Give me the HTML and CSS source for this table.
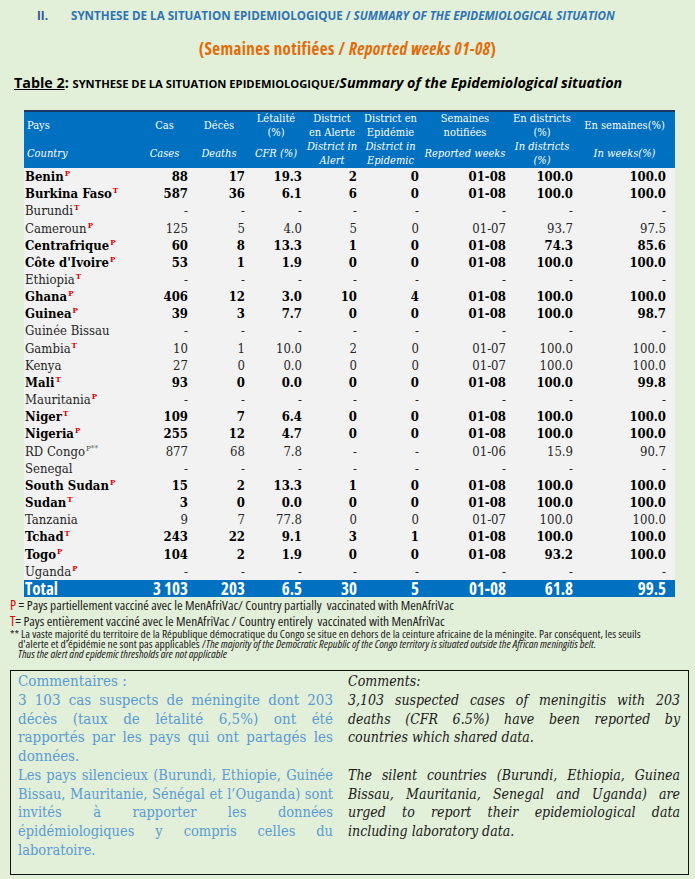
FILE: index.html
```html
<!DOCTYPE html>
<html lang="fr">
<head>
<meta charset="utf-8">
<title>Synthese</title>
<link rel="stylesheet" href="styles.css">
</head>
<body>
<div class="sec"><span class="num">II.</span><span class="sectxt">SYNTHESE DE LA SITUATION EPIDEMIOLOGIQUE / <i>SUMMARY OF THE EPIDEMIOLOGICAL SITUATION</i></span></div>
<div class="sub">(Semaines notifiées / <i>Reported weeks 01-08</i>)</div>
<div class="ttl"><span class="tnum">Table 2</span>: <span class="tcaps">SYNTHESE DE LA SITUATION EPIDEMIOLOGIQUE/</span><i>Summary of the Epidemiological situation</i></div>

<table class="tbl">
<colgroup>
<col class="c1"><col class="c2"><col class="c3"><col class="c4"><col class="c5"><col class="c6"><col class="c7"><col class="c8"><col class="c9">
</colgroup>
<thead>
<tr class="hfr">
<th class="hl">Pays</th><th>Cas</th><th>Décès</th><th>Létalité<br>(%)</th><th>District<br>en Alerte</th><th>District en<br>Epidémie</th><th>Semaines<br>notifiées</th><th>En districts<br>(%)</th><th>En semaines(%)</th>
</tr>
<tr class="hen">
<th class="hl">Country</th><th>Cases</th><th>Deaths</th><th>CFR (%)</th><th>District in<br>Alert</th><th>District in<br>Epidemic</th><th>Reported weeks</th><th>In districts<br>(%)</th><th>In weeks(%)</th>
</tr>
</thead>
<tbody>
<tr class="b"><td>Benin<sup>P</sup></td><td>88</td><td>17</td><td>19.3</td><td>2</td><td>0</td><td>01-08</td><td>100.0</td><td>100.0</td></tr>
<tr class="b"><td>Burkina Faso<sup>T</sup></td><td>587</td><td>36</td><td>6.1</td><td>6</td><td>0</td><td>01-08</td><td>100.0</td><td>100.0</td></tr>
<tr><td>Burundi<sup>T</sup></td><td>-</td><td>-</td><td>-</td><td>-</td><td>-</td><td>-</td><td>-</td><td>-</td></tr>
<tr><td>Cameroun<sup>P</sup></td><td>125</td><td>5</td><td>4.0</td><td>5</td><td>0</td><td>01-07</td><td>93.7</td><td>97.5</td></tr>
<tr class="b"><td>Centrafrique<sup>P</sup></td><td>60</td><td>8</td><td>13.3</td><td>1</td><td>0</td><td>01-08</td><td>74.3</td><td>85.6</td></tr>
<tr class="b"><td>Côte d'Ivoire<sup>P</sup></td><td>53</td><td>1</td><td>1.9</td><td>0</td><td>0</td><td>01-08</td><td>100.0</td><td>100.0</td></tr>
<tr><td>Ethiopia<sup>T</sup></td><td>-</td><td>-</td><td>-</td><td>-</td><td>-</td><td>-</td><td>-</td><td>-</td></tr>
<tr class="b"><td>Ghana<sup>P</sup></td><td>406</td><td>12</td><td>3.0</td><td>10</td><td>4</td><td>01-08</td><td>100.0</td><td>100.0</td></tr>
<tr class="b"><td>Guinea<sup>P</sup></td><td>39</td><td>3</td><td>7.7</td><td>0</td><td>0</td><td>01-08</td><td>100.0</td><td>98.7</td></tr>
<tr><td>Guinée Bissau</td><td>-</td><td>-</td><td>-</td><td>-</td><td>-</td><td>-</td><td>-</td><td>-</td></tr>
<tr><td>Gambia<sup>T</sup></td><td>10</td><td>1</td><td>10.0</td><td>2</td><td>0</td><td>01-07</td><td>100.0</td><td>100.0</td></tr>
<tr><td>Kenya</td><td>27</td><td>0</td><td>0.0</td><td>0</td><td>0</td><td>01-07</td><td>100.0</td><td>100.0</td></tr>
<tr class="b"><td>Mali<sup>T</sup></td><td>93</td><td>0</td><td>0.0</td><td>0</td><td>0</td><td>01-08</td><td>100.0</td><td>99.8</td></tr>
<tr><td>Mauritania<sup>P</sup></td><td>-</td><td>-</td><td>-</td><td>-</td><td>-</td><td>-</td><td>-</td><td>-</td></tr>
<tr class="b"><td>Niger<sup>T</sup></td><td>109</td><td>7</td><td>6.4</td><td>0</td><td>0</td><td>01-08</td><td>100.0</td><td>100.0</td></tr>
<tr class="b"><td>Nigeria<sup>P</sup></td><td>255</td><td>12</td><td>4.7</td><td>0</td><td>0</td><td>01-08</td><td>100.0</td><td>100.0</td></tr>
<tr><td>RD Congo<sup class="g">P**</sup></td><td>877</td><td>68</td><td>7.8</td><td>-</td><td>-</td><td>01-06</td><td>15.9</td><td>90.7</td></tr>
<tr><td>Senegal</td><td>-</td><td>-</td><td>-</td><td>-</td><td>-</td><td>-</td><td>-</td><td>-</td></tr>
<tr class="b"><td>South Sudan<sup>P</sup></td><td>15</td><td>2</td><td>13.3</td><td>1</td><td>0</td><td>01-08</td><td>100.0</td><td>100.0</td></tr>
<tr class="b"><td>Sudan<sup>T</sup></td><td>3</td><td>0</td><td>0.0</td><td>0</td><td>0</td><td>01-08</td><td>100.0</td><td>100.0</td></tr>
<tr><td>Tanzania</td><td>9</td><td>7</td><td>77.8</td><td>0</td><td>0</td><td>01-07</td><td>100.0</td><td>100.0</td></tr>
<tr class="b"><td>Tchad<sup>T</sup></td><td>243</td><td>22</td><td>9.1</td><td>3</td><td>1</td><td>01-08</td><td>100.0</td><td>100.0</td></tr>
<tr class="b"><td>Togo<sup>P</sup></td><td>104</td><td>2</td><td>1.9</td><td>0</td><td>0</td><td>01-08</td><td>93.2</td><td>100.0</td></tr>
<tr><td>Uganda<sup>P</sup></td><td>-</td><td>-</td><td>-</td><td>-</td><td>-</td><td>-</td><td>-</td><td>-</td></tr>
<tr class="tot"><td>Total</td><td>3 103</td><td>203</td><td>6.5</td><td>30</td><td>5</td><td>01-08</td><td>61.8</td><td>99.5</td></tr>
</tbody>
</table>

<div class="notes">
<div class="n1"><span class="red">P</span> = Pays partiellement vacciné avec le MenAfriVac/ Country partially&nbsp; vaccinated with MenAfriVac</div>
<div class="n1"><span class="red">T</span>= Pays entièrement vacciné avec le MenAfriVac / Country entirely&nbsp; vaccinated with MenAfriVac</div>
<div class="n2">** La vaste majorité du territoire de la République démocratique du Congo se situe en dehors de la ceinture africaine de la méningite. Par conséquent, les seuils<br>d'alerte et d'épidémie ne sont pas applicables /<i>The majority of the Democratic Republic of the Congo territory is situated outside the African meningitis belt.<br>Thus the alert and epidemic thresholds are not applicable</i></div>
</div>

<div class="box">
<div class="colfr">
<p>Commentaires :</p>
<p class="just p1">3 103 cas suspects de méningite dont 203 décès (taux de létalité 6,5%) ont été rapportés par les pays qui ont partagés les données.</p>
<p class="just p2">Les pays silencieux (Burundi, Ethiopie, Guinée Bissau, Mauritanie, Sénégal et l’Ouganda) sont invités à rapporter les données épidémiologiques y compris celles du laboratoire.</p>
</div>
<div class="colen">
<p>Comments:</p>
<p class="just">3,103 suspected cases of meningitis with 203 deaths (CFR 6.5%) have been reported by countries which shared data.</p>
<p class="gap just">The silent countries (Burundi, Ethiopia, Guinea Bissau, Mauritania, Senegal and Uganda) are urged to report their epidemiological data including laboratory data.</p>
</div>
</div>
</body>
</html>
```
FILE: styles.css
```css
html, body {
  margin: 0;
  padding: 0;
}
body {
  background: #e2efd9;
  width: 695px;
  height: 879px;
  overflow: hidden;
  font-family: "DejaVu Serif Condensed", "DejaVu Serif", serif;
  font-stretch: condensed;
  color: #262626;
}
.sec, .sub, .ttl, .tot td, .notes {
  font-family: "Open Sans", "DejaVu Sans Condensed", sans-serif;
}
.sec {
  margin-top: 6px;
  height: 20px;
  line-height: 20px;
  font-size: 11.6px;
  font-stretch: 90%;
  font-weight: bold;
  color: #2e74b5;
  display: flex;
}
.sec .num {
  width: 34px;
  padding-left: 37px;
  color: #2f5597;
}
.sub {
  margin-top: 12px;
  height: 22px;
  line-height: 22px;
  font-size: 17px;
  font-stretch: 75%;
  letter-spacing: 0.4px;
  font-weight: bold;
  color: #e36c0a;
  text-align: center;
}
.ttl {
  margin-top: 13px;
  height: 20px;
  line-height: 20px;
  padding-left: 14px;
  font-weight: bold;
  font-size: 14.3px;
  font-stretch: 90%;
  color: #000;
  white-space: nowrap;
}
.tnum { text-decoration: underline; }
.tcaps { font-size: 11.2px; }
.tbl {
  margin: 17px 0 0 24px;
  width: 651px;
  table-layout: fixed;
  border-collapse: collapse;
  background: #f2f2f2;
}
.c1 { width: 116px; }
.c2 { width: 52px; }
.c3 { width: 57px; }
.c4 { width: 57px; }
.c5 { width: 55px; }
.c6 { width: 62px; }
.c7 { width: 87px; }
.c8 { width: 67px; }
.c9 { width: 98px; }
thead tr { background: #0070c0; color: #fff; }
th {
  font-weight: normal;
  font-size: 11px;
  line-height: 14px;
  text-align: center;
  padding: 0 3px 0 0;
  vertical-align: middle;
  white-space: nowrap;
}
th.hl { text-align: left; padding-left: 3px; }
.hfr th { height: 28px; border-top: 2px solid #1f3864; }
.hen th { height: 26px; font-style: italic; }
td {
  height: 17.17px;
  padding: 0 4px 0 0;
  font-size: 13px;
  line-height: 17px;
  text-align: right;
  white-space: nowrap;
  vertical-align: middle;
}
td:first-child { text-align: left; padding-left: 1px; }
td:last-child { padding-right: 9px; }
tr.b td { font-weight: bold; color: #000; }
sup {
  font-size: 8px;
  line-height: 0;
  vertical-align: 5px;
  color: #e00000;
  font-weight: bold;
  margin-left: 1px;
}
sup.g { color: #555; font-weight: normal; }
tr.tot td {
  background: #0070c0;
  color: #fff;
  font-weight: bold;
  font-size: 17px;
  line-height: 17px;
  font-stretch: 75%;
}
.notes { color: #1a1a1a; padding-left: 10px; margin-top: 0; font-stretch: 75%; }
.n1 { font-size: 13.4px; line-height: 15px; }
.red { color: #e00000; font-size: 14px; }
.n2 {
  font-size: 11.5px;
  line-height: 10px;
  padding-left: 8px;
  text-indent: -8px;
  white-space: nowrap;
}
.box {
  margin: 11px 0 0 10px;
  width: 679px;
  height: 205px;
  border: 1px solid #111;
  display: flex;
  gap: 15px;
  padding: 1px 8px 0 7px;
  box-sizing: border-box;
  line-height: 18.8px;
}
.box p { margin: 0; }
.just { text-align: justify; }
.colfr { width: 316px; color: #5b9bd5; font-size: 15px; }
.colfr .p2 { font-size: 14.5px; }
.colen { width: 333px; color: #1a1a1a; font-style: italic; font-size: 14px; }
.gap { margin-top: 18.8px !important; }
```
